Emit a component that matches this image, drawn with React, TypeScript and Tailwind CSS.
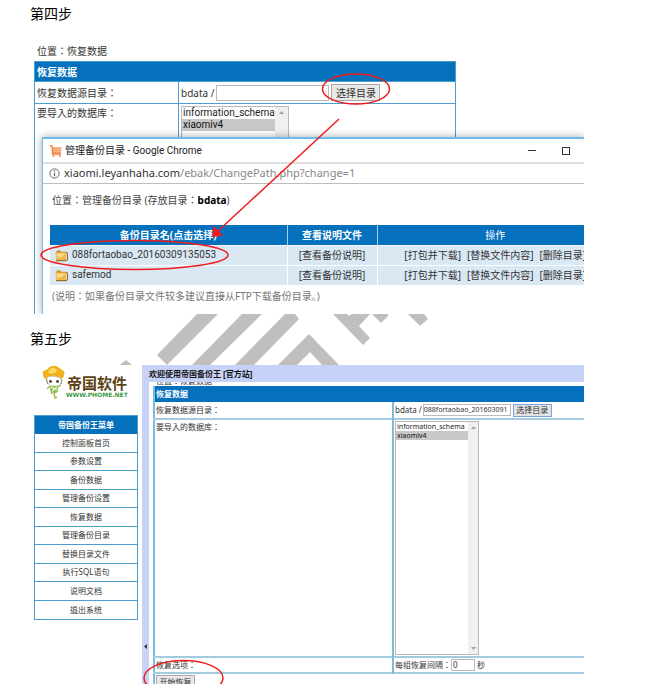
import React from 'react';

const menuItems = [
  '控制面板首页',
  '参数设置',
  '备份数据',
  '管理备份设置',
  '恢复数据',
  '管理备份目录',
  '替换目录文件',
  '执行SQL语句',
  '说明文档',
  '退出系统',
];

const folders = ['088fortaobao_20160309135053', 'safemod'];

function Folder() {
  return (
    <svg className="h-[13px] w-[13px] shrink-0" viewBox="0 0 13 13" aria-hidden="true">
      <path d="M1 3.2 L2 1.5 H5.4 L6.4 2.8 H11 V4.4 H1 Z" fill="#c98f2b" />
      <path d="M0.5 3.6 H11 V11.5 H1.2 Z" fill="#f0b849" />
      <path d="M1.5 4.5 H10 L7 8 L2 9 Z" fill="#fbdc8b" />
      <path d="M11 3.2 L12.4 3.9 V11 L11 11.7 H1" fill="none" stroke="#8d5c14" strokeWidth="1" />
    </svg>
  );
}

function Cart() {
  return (
    <svg className="h-3 w-3" viewBox="0 0 12 12" fill="none" stroke="#ee7a2c" aria-hidden="true">
      <path d="M0 0.8 H2 L2.6 9 H11" strokeWidth="1.3" />
      <path d="M3 3.2 H11.5 M3 5.2 H11.3 M3 7.2 H11" strokeWidth="1.2" />
      <path d="M2.6 11 H4.4 M9 11 H10.8" strokeWidth="1.6" />
    </svg>
  );
}

function Mascot() {
  return (
    <svg className="h-[34px] w-6 shrink-0" viewBox="0 0 24 34" aria-hidden="true">
      <path d="M1 9 C0 5 4 5 6 4 C8 0 15 0 17 3 C20 5 24 6 22 10 C22 14 17 15 11 14 C5 15 1 14 1 9Z" fill="#f2b01c" />
      <path d="M6 7 C8 2 14 2 15 6 C13 9 8 10 6 7Z" fill="#fbdc61" />
      <path d="M5 13 C5 10 18 11 19 14 C21 19 16 22 12 21 C7 21 4 18 5 13Z" fill="#fff" stroke="#b9b3a4" strokeWidth="0.7" />
      <circle cx="8.5" cy="16.5" r="1.4" fill="#4a4038" />
      <circle cx="15.5" cy="16.5" r="1.4" fill="#4a4038" />
      <path d="M4 14 L6 19 M20 14 L19 19" stroke="#8c8473" strokeWidth="1" />
      <path d="M8 21 L16 21 L16 27 L12 29 L8 26Z" fill="#8fc653" />
      <path d="M9 22 L15 25 M10 26 L15 22" stroke="#eef7da" strokeWidth="1.2" />
      <path d="M8 21 L5 24 M16 22 L19 20 M12 28 L13 33 L15 32 M10 27 L9 29" stroke="#a9b866" strokeWidth="1.4" fill="none" />
    </svg>
  );
}

function DatabaseList({ label, className, track }: { label: string; className: string; track: string }) {
  return (
    <div className={'flex overflow-hidden border border-[#b9b9b9] bg-white ' + className}>
      <select
        multiple
        aria-label={label}
        defaultValue={['xiaomiv4']}
        className="h-full min-w-0 flex-1 appearance-none overflow-hidden border-0 bg-white p-0 text-[#222] outline-none [scrollbar-width:none]"
      >
        <option value="information_schema" className="p-0 px-px">information_schema</option>
        <option value="xiaomiv4" className="bg-[#c8c8c8] p-0 px-px">xiaomiv4</option>
      </select>
      <div className={'flex shrink-0 flex-col items-center justify-between bg-[#f0f0f0] py-1 ' + track}>
        <svg className="h-[3px] w-[5px]" viewBox="0 0 5 3" aria-hidden="true"><path d="M0 3 L2.5 0 L5 3Z" fill="#a0a0a0" /></svg>
        <svg className="h-[3px] w-[5px]" viewBox="0 0 5 3" aria-hidden="true"><path d="M0 0 L2.5 3 L5 0Z" fill="#a0a0a0" /></svg>
      </div>
    </div>
  );
}

function ChromeWindow() {
  return (
    <section className="absolute top-[99px] right-0 bottom-0 left-2 overflow-hidden border-t-2 border-l border-[#6dbdeb] bg-white shadow-[0_0_8px_rgba(0,0,0,0.35)]">
      <header className="flex h-[23px] items-center pl-[7px] text-[10px] text-[#222]">
        <Cart />
        <span className="ml-[3px] flex-1 font-['Roboto','Noto_Sans_CJK_TC',sans-serif]">管理备份目录 - Google Chrome</span>
        <button type="button" aria-label="Minimize" className="flex h-4 w-4 items-center justify-center">
          <span className="h-px w-2 bg-[#333]" />
        </button>
        <button type="button" aria-label="Maximize" className="mr-[10px] ml-[18px] flex h-4 w-4 items-center justify-center">
          <span className="h-2 w-2 border border-[#333]" />
        </button>
      </header>
      <div className="flex h-[22px] items-center border-t-2 border-b border-t-[#dedede] border-b-[#bdbdbd] pl-[6px] text-[11px] text-[#888]">
        <svg className="mr-1 h-[11px] w-[11px]" viewBox="0 0 11 11" fill="none" stroke="#666" aria-hidden="true">
          <circle cx="5.5" cy="5.5" r="4.6" />
          <path d="M5.5 4.8 V8.2 M5.5 2.6 V3.8" strokeWidth="1.2" />
        </svg>
        <span className="text-[#333]">xiaomi.leyanhaha.com</span>/ebak/ChangePath.php?change=1
      </div>
      <p className="mt-2 pl-[9px] text-[10px] leading-[16px] text-[#444]">
        位置：管理备份目录 (存放目录：<b className="text-black">bdata</b>)
      </p>
      <div className="mt-[17px] mr-[-29px] pl-[7px]">
        <table className="w-full table-fixed border-collapse text-center text-[10px] leading-[14px] text-[#333]">
          <colgroup>
            <col className="w-[237px]" />
            <col className="w-[90px]" />
            <col />
          </colgroup>
          <thead>
            <tr className="h-5 border-b border-[#f4f8fb] bg-[#0571bd] text-white">
              <th className="border-r border-[#a9cfe8] p-0 font-bold">备份目录名(点击选择)</th>
              <th className="border-r border-[#a9cfe8] p-0 font-bold">查看说明文件</th>
              <th className="p-0 font-normal">操作</th>
            </tr>
          </thead>
          <tbody>
            {folders.map((name) => (
              <tr key={name} className="h-5 border-b border-white bg-[#dae8f4]">
                <td className="border-r border-white p-0">
                  <div className="flex items-center gap-1 pl-[5px] font-['Roboto',sans-serif]">
                    <Folder />
                    <a href="#pick">{name}</a>
                  </div>
                </td>
                <td className="border-r border-white p-0"><a href="#note">[查看备份说明]</a></td>
                <td className="p-0">
                  <div className="flex justify-center gap-[6px] whitespace-nowrap">
                    <a href="#pack">[打包并下载]</a>
                    <a href="#replace">[替换文件内容]</a>
                    <a href="#delete">[删除目录]</a>
                  </div>
                </td>
              </tr>
            ))}
          </tbody>
        </table>
      </div>
      <p className="mt-[3px] pl-[9px] text-[10px] leading-[14px] text-[#777]">
        (说明：如果备份目录文件较多建议直接从FTP下载备份目录<span className="font-['Noto_Sans_CJK_SC',sans-serif]">。</span>)
      </p>
    </section>
  );
}

function StepFour() {
  return (
    <div className="relative mr-16 ml-[34px] h-[276px] overflow-hidden text-[10px] text-[#333]">
      <p className="pt-[6px] pb-[3px] pl-[3px] leading-[14px]">位置：恢复数据</p>
      <table className="h-[280px] w-[422px] table-fixed border-collapse border border-[#4a9fd0] leading-[14px]">
        <colgroup>
          <col className="w-[144px]" />
          <col />
        </colgroup>
        <thead>
          <tr className="h-[20px] bg-[#0571bd] text-left text-white">
            <th colSpan={2} className="p-0 pl-[2px]">恢复数据</th>
          </tr>
        </thead>
        <tbody>
          <tr className="h-[22px] border border-[#4a9fd0]">
            <td className="border-r border-[#4a9fd0] p-0 pl-[2px]">恢复数据源目录：</td>
            <td className="p-0 pl-[2px]">
              <div className="flex items-center">
                <label htmlFor="path-a">bdata /</label>
                <input id="path-a" className="ml-[2px] h-4 w-[113px] border border-[#bbb] px-1 outline-none" />
                <button type="button" className="ml-[2px] h-[17px] w-[49px] border border-[#aaa] bg-[#e8e8e8] leading-[14px]">选择目录</button>
              </div>
            </td>
          </tr>
          <tr className="align-top">
            <td className="border-r border-[#4a9fd0] p-0 pt-[2px] pl-[2px]">要导入的数据库：</td>
            <td className="p-0 pt-[2px] pl-[2px]">
              <DatabaseList label="要导入的数据库" className="h-[150px] w-[108px] font-['Roboto',sans-serif] leading-[13px]" track="w-[13px]" />
            </td>
          </tr>
        </tbody>
      </table>
      <ChromeWindow />
      {/* Pointer from the button down to the directory row */}
      <svg className="pointer-events-none absolute top-0 left-0 h-[276px] w-[550px]" viewBox="34 38 550 276" fill="none" stroke="#ee1c1c" strokeWidth="1.5" aria-hidden="true">
        <ellipse cx="356" cy="89" rx="33.5" ry="15" />
        <ellipse cx="134.5" cy="255" rx="93.5" ry="14.5" />
        <path d="M339 119 L218 231" />
        <path d="M212 237 L213.5 226 L223 235.5Z" fill="#ee1c1c" stroke="none" />
      </svg>
    </div>
  );
}

function Watermark() {
  return (
    <svg className="absolute top-0 left-0 h-[51px] w-[648px]" viewBox="0 314 648 51" fill="#bfbfbf" aria-hidden="true">
      <path d="M197 314 H218 L167 365 L157 355Z" />
      <path d="M242 314 H262 L210 365 H192Z" />
      <path d="M285 314 H295 L299 319 L254 365 H235Z" />
      <path d="M278 365 L309 334 L339 365 H322 L310 352 L297 365Z" />
      <path d="M333 314 H347 L349 316 L352 314 H370 L359 326 L370 338 L363 345Z" />
      <path d="M372 314 H388 V316 L381 323Z" />
      <path d="M408 314 H424 L428 319 L420 326Z" />
      <path d="M120 365 L126 360 L132 365Z" />
    </svg>
  );
}

function Sidebar() {
  return (
    <aside className="w-[108px] shrink-0 pr-1">
      <div className="flex h-[50px] pl-2">
        <Mascot />
        <div className="flex-1 pt-[10px] whitespace-nowrap">
          <div className="pl-px text-[15px] leading-[17px] font-bold text-[#5c4113]">帝国软件</div>
          <div className="font-['DejaVu_Sans'] text-[6px] leading-[5px] font-bold text-[#3b9a45]">WWW.PHOME.NET</div>
        </div>
      </div>
      <nav className="border border-[#4a9fd0] text-center text-[8px] text-[#333]">
        <h2 className="h-[18px] bg-[#0571bd] leading-[18px] font-bold text-white">帝国备份王菜单</h2>
        <ul className="grid h-[185px] auto-rows-fr">
          {menuItems.map((item) => (
            <li key={item} className="flex items-center justify-center border-b border-[#4a9fd0] last:border-b-0">
              <a href="#menu">{item}</a>
            </li>
          ))}
        </ul>
      </nav>
    </aside>
  );
}

function StepFive() {
  return (
    <div className="relative mr-16 ml-[34px] flex h-[319px] overflow-hidden text-[8px] text-[#333]">
      <Sidebar />
      <button type="button" aria-label="Toggle menu" className="flex w-[7px] shrink-0 items-start justify-center bg-[#c6d2f7] pt-[279px]">
        <svg className="h-[5px] w-[3px]" viewBox="0 0 3 5" aria-hidden="true"><path d="M3 0 L0 2.5 L3 5Z" fill="#333" /></svg>
      </button>
      <div className="min-w-0 flex-1">
        <div className="h-[17px] bg-[#c6d2f7] leading-[17px] font-bold text-[#111]">欢迎使用帝国备份王 [官方站]</div>
        <div className="pl-1">
          <div className="flex h-[4px] items-end overflow-hidden pl-[3px] leading-[11px]">位置：恢复数据</div>
          <table className="w-full table-fixed border-collapse border-l-2 border-[#7fb9dc] leading-[12px]">
            <colgroup>
              <col className="w-[239px]" />
              <col />
            </colgroup>
            <thead>
              <tr className="h-4 bg-[#0571bd] text-left text-white">
                <th colSpan={2} className="p-0 pl-px">恢复数据</th>
              </tr>
            </thead>
            <tbody>
              <tr className="h-[17px] border-b-2 border-[#a2cbe2]">
                <td className="border-r-2 border-[#7fb9dc] p-0 pl-px">恢复数据源目录：</td>
                <td className="p-0 pl-px">
                  <div className="flex items-center">
                    <label htmlFor="path-b">bdata /</label>
                    <input id="path-b" defaultValue="088fortaobao_201603091" className="ml-px h-3 w-[88px] border border-[#bbb] text-[7px] outline-none" />
                    <button type="button" className="ml-[2px] h-[13px] w-[39px] border border-[#7ea2dd] bg-[#e4e4e4] leading-[10px]">选择目录</button>
                  </div>
                </td>
              </tr>
              <tr className="border-b-2 border-[#a2cbe2] align-top">
                <td className="border-r-2 border-[#7fb9dc] p-0 pt-px pl-px">要导入的数据库：</td>
                <td className="p-0 py-px pl-px">
                  <DatabaseList label="要导入的数据库" className="h-[234px] w-[84px] text-[7px] leading-[10px]" track="w-[10px]" />
                </td>
              </tr>
              <tr className="h-4 border-b-2 border-[#a2cbe2]">
                <td className="border-r-2 border-[#7fb9dc] p-0 pl-px">恢复选项：</td>
                <td className="p-0 pl-px">
                  <div className="flex items-center">
                    <label htmlFor="interval">每组恢复间隔：</label>
                    <input id="interval" defaultValue="0" className="h-3 w-6 border border-[#bbb] px-px outline-none" />
                    <span className="ml-[2px]">秒</span>
                  </div>
                </td>
              </tr>
              <tr className="align-top">
                <td colSpan={2} className="p-0 pt-px pl-px">
                  <button type="button" className="h-[14px] w-[39px] border border-[#aaa] bg-[#e8e8e8] leading-[12px]">开始恢复</button>
                </td>
              </tr>
            </tbody>
          </table>
        </div>
      </div>
      <svg className="pointer-events-none absolute top-0 left-0 h-[319px] w-[550px]" viewBox="34 365 550 319" fill="none" stroke="#ee1c1c" strokeWidth="1.5" aria-hidden="true">
        <ellipse cx="183.5" cy="678" rx="39.5" ry="17.5" />
      </svg>
    </div>
  );
}

export default function App() {
  return (
    <main className="h-screen overflow-hidden bg-white font-['Noto_Sans','Noto_Sans_CJK_TC',sans-serif]">
      <h1 className="h-[38px] pt-1 pl-[30px] text-[14px] leading-[20px] text-black">第四步</h1>
      <StepFour />
      <div className="relative h-[51px] overflow-hidden">
        <Watermark />
        <h1 className="relative pt-[15px] pl-[30px] text-[14px] leading-[20px] text-black">第五步</h1>
      </div>
      <StepFive />
    </main>
  );
}
